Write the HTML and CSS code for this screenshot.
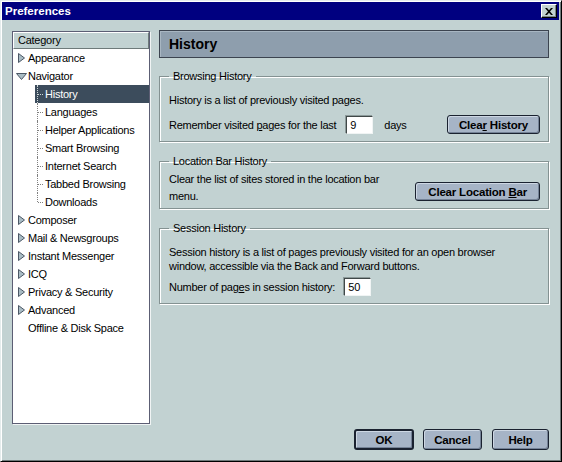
FILE: index.html
```html
<!DOCTYPE html>
<html lang="en">

<head>
  <meta charset="UTF-8" />
  <title>Preferences</title>
  <link rel="stylesheet" href="styles.css">
</head>

<body>

  <div class="window">
    <div class="titlebar">
      <span class="title">Preferences</span>
      <span class="close">
        <svg width="8" height="7" viewBox="0 0 8 7">
          <path d="M0 0h2l2 2.2L6 0h2L5 3.5 8 7H6L4 4.8 2 7H0l3-3.5z" fill="#000" />
        </svg>
      </span>
    </div>

    <div class="body">
      <!-- category tree -->
      <div class="tree">
        <div class="tree-head">Category</div>
        <ul class="tree-list">
          <li class="row"><span class="twisty"><svg width="7" height="10"><path d="M.5 .5L6.5 5 .5 9.5z" class="tri" /></svg></span>Appearance</li>
          <li class="row"><span class="twisty"><svg width="11" height="7"><path d="M.5 .5h10L5.5 6.5z" class="tri" /></svg></span>Navigator</li>
          <li class="row child selected">History</li>
          <li class="row child">Languages</li>
          <li class="row child">Helper Applications</li>
          <li class="row child">Smart Browsing</li>
          <li class="row child">Internet Search</li>
          <li class="row child">Tabbed Browsing</li>
          <li class="row child last">Downloads</li>
          <li class="row"><span class="twisty"><svg width="7" height="10"><path d="M.5 .5L6.5 5 .5 9.5z" class="tri" /></svg></span>Composer</li>
          <li class="row"><span class="twisty"><svg width="7" height="10"><path d="M.5 .5L6.5 5 .5 9.5z" class="tri" /></svg></span>Mail &amp; Newsgroups</li>
          <li class="row"><span class="twisty"><svg width="7" height="10"><path d="M.5 .5L6.5 5 .5 9.5z" class="tri" /></svg></span>Instant Messenger</li>
          <li class="row"><span class="twisty"><svg width="7" height="10"><path d="M.5 .5L6.5 5 .5 9.5z" class="tri" /></svg></span>ICQ</li>
          <li class="row"><span class="twisty"><svg width="7" height="10"><path d="M.5 .5L6.5 5 .5 9.5z" class="tri" /></svg></span>Privacy &amp; Security</li>
          <li class="row"><span class="twisty"><svg width="7" height="10"><path d="M.5 .5L6.5 5 .5 9.5z" class="tri" /></svg></span>Advanced</li>
          <li class="row"><span class="twisty"></span>Offline &amp; Disk Space</li>
        </ul>
      </div>

      <!-- history panel -->
      <div class="main">
        <div class="page-head">History</div>

        <fieldset class="group">
          <legend>Browsing History</legend>
          <p class="text">History is a list of previously visited pages.</p>
          <div class="line first-line">
            <span>Remember visited <u>p</u>ages for the last</span>
            <input class="num days-input" type="text" value="9">
            <span class="unit">days</span>
            <button class="btn push">Clea<u>r</u> History</button>
          </div>
        </fieldset>

        <fieldset class="group location">
          <legend>Location Bar History</legend>
          <div class="line top">
            <p class="text tall">Clear the list of sites stored in the location bar<br>menu.</p>
            <button class="btn push drop">Clear Location <u>B</u>ar</button>
          </div>
        </fieldset>

        <fieldset class="group">
          <legend>Session History</legend>
          <p class="text">Session history is a list of pages previously visited for an open browser<br>window, accessible via the Back and Forward buttons.</p>
          <div class="line session-line">
            <span>Number of pag<u>e</u>s in session history:</span>
            <input class="num pages-input" type="text" value="50">
          </div>
        </fieldset>
      </div>
    </div>

    <div class="footer">
      <button class="btn ok default">OK</button>
      <button class="btn cancel">Cancel</button>
      <button class="btn help">Help</button>
    </div>
  </div>

</body>

</html>
```

FILE: styles.css
```css
/* Classic dialog look */
body {
  margin: 0;
  font-family: "Liberation Sans", Arial, sans-serif;
  font-size: 11px;
  letter-spacing: -0.25px;
  color: #000;
}

.window {
  width: 562px;
  height: 462px;
  box-sizing: border-box;
  background: #c2d2d2;
  border: 1px solid;
  border-color: #e4ecec #000 #000 #e4ecec;
  box-shadow: inset 1px 1px 0 #fff, inset -1px -1px 0 #6e7a7a;
  display: flex;
  flex-direction: column;
}

/* Title bar */
.titlebar {
  height: 18px;
  margin: 1px 2px 0 1px;
  padding-left: 3px;
  background: #000080;
  color: #fff;
  font-weight: bold;
  font-size: 11.5px;
  letter-spacing: 0;
  display: flex;
  align-items: center;
  justify-content: space-between;
}

.close {
  width: 14px;
  height: 12px;
  margin-right: 2px;
  background: #c2d2d2;
  border: 1px solid;
  border-color: #fff #000 #000 #fff;
  box-shadow: inset -1px -1px 0 #7c8888;
  display: flex;
  align-items: center;
  justify-content: center;
}

.body {
  display: flex;
  height: 394px;
  padding: 10px 12px 0 11px;
}

/* Category tree */
.tree {
  width: 138px;
  height: 393px;
  margin-top: 1px;
  margin-right: 9px;
  box-sizing: border-box;
  background: #fff;
  border: 1px solid #5c5e74;
  box-shadow: 1px 1px 0 #f0f4f4;
}

.tree-head {
  height: 17px;
  box-sizing: border-box;
  padding-left: 4px;
  line-height: 15px;
  background: #c2d2d2;
  border: 1px solid;
  border-color: #fff #6e7a7a #6e7a7a #fff;
}

.tree-list {
  list-style: none;
  margin: 0;
  padding: 0 0 0 1px;
}

.row {
  height: 18px;
  display: flex;
  align-items: center;
  white-space: nowrap;
}

.twisty {
  width: 14px;
  display: flex;
  justify-content: center;
}

.tri {
  fill: #a9bcc4;
  stroke: #4c5866;
  stroke-width: 1;
}

/* child rows hang off a dotted line */
.child {
  position: relative;
  margin-left: 21px;
  padding-left: 10px;
  border-color: #808080;
}

.child::before {
  content: "";
  position: absolute;
  left: 2px;
  top: 0;
  bottom: 0;
  border-left: 1px dotted;
  border-color: inherit;
}

.child::after {
  content: "";
  position: absolute;
  left: 3px;
  top: 9px;
  width: 5px;
  border-top: 1px dotted;
  border-color: inherit;
}

.child.last::before {
  bottom: 9px;
}

.selected {
  background: #3c4c5c;
  color: #fff;
  border-color: #d0d8d8;
}

/* Right side panel */
.main {
  flex: 1;
  display: flex;
  flex-direction: column;
}

.page-head {
  height: 28px;
  box-sizing: border-box;
  padding-left: 9px;
  line-height: 26px;
  font-size: 14px;
  font-weight: bold;
  letter-spacing: 0;
  background: #8e9ead;
  border: 1px solid #3c4450;
  box-shadow: inset 1px 1px 0 #a8b6c2;
}

.group {
  margin: 11px 0 0;
  padding: 10px 8px 7px 9px;
  min-width: 0;
  border: 1px solid #849292;
  box-shadow: 1px 1px 0 #fff, inset 1px 1px 0 #fff;
}

.group + .group {
  margin-top: 12px;
}

.group legend {
  padding: 0 4px;
  line-height: 14px;
}

.group.location {
  padding-top: 3px;
  padding-bottom: 3px;
}

.text {
  margin: 0;
  line-height: 14px;
}

.text.tall {
  line-height: 17px;
}

.line {
  display: flex;
  align-items: center;
  height: 19px;
}

.line.top {
  height: auto;
  align-items: flex-start;
}

.first-line {
  margin-top: 8px;
}

.session-line {
  margin-top: 4px;
}

.num {
  width: 27px;
  height: 18px;
  box-sizing: border-box;
  padding: 0 3px;
  font-family: inherit;
  font-size: 11px;
  background: #fff;
  border: 1px solid;
  border-color: #404848 #f0f4f4 #f0f4f4 #404848;
  box-shadow: -1px -1px 0 #8c9a9a;
}

.days-input {
  margin-left: 10px;
}

.pages-input {
  margin-left: 9px;
}

.unit {
  margin-left: 11px;
}

/* Push buttons */
.btn {
  height: 19px;
  padding: 0 11px;
  font-family: inherit;
  font-size: 11.5px;
  font-weight: bold;
  letter-spacing: -0.2px;
  color: #000;
  background: #a6b4c6;
  border: 1px solid #1a2230;
  border-radius: 3px;
  box-shadow: inset 1px 1px 0 #cdd7e3, inset -1px -1px 0 #748296;
}

.push {
  margin-left: auto;
}

.drop {
  margin-top: 11px;
  padding: 0 12px;
}

.footer {
  display: flex;
  justify-content: flex-end;
  padding: 5px 12px 0 0;
}

.footer .btn {
  height: 21px;
  padding: 0;
}

.ok {
  width: 60px;
  margin-right: 9px;
}

.default {
  border-width: 2px;
}

.cancel {
  width: 59px;
  margin-right: 10px;
}

.help {
  width: 57px;
}
```
